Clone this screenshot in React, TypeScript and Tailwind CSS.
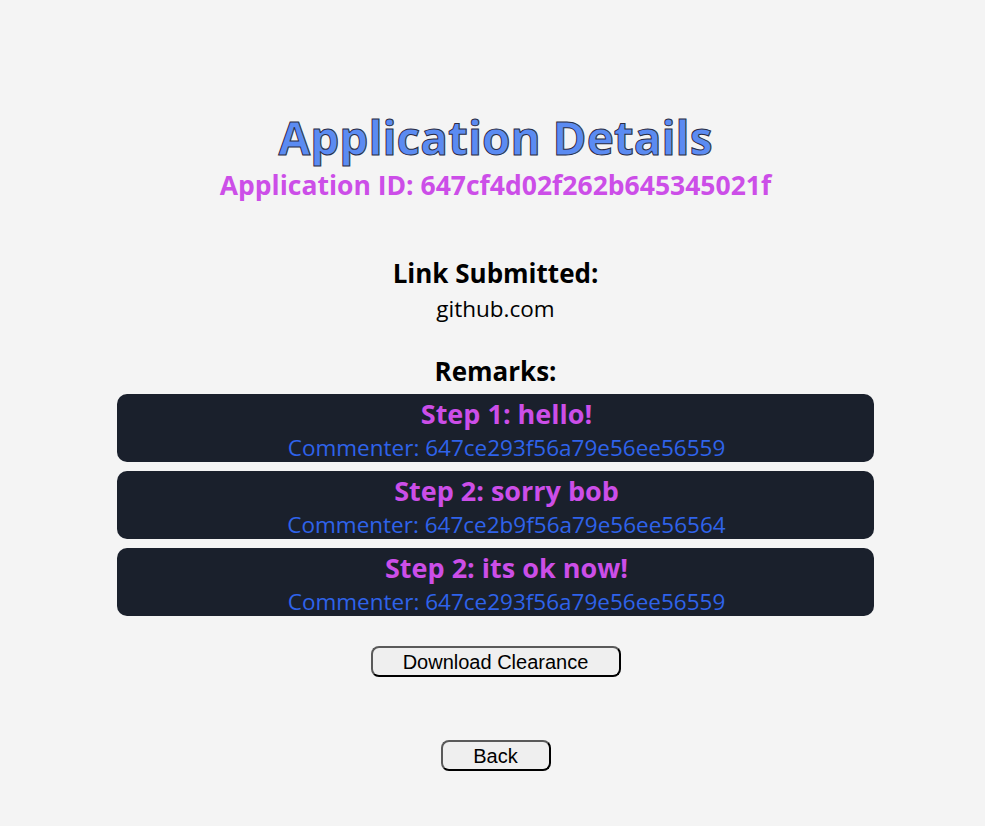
import React from "react";

const remarks = [
  { step: 1, text: "hello!", commenter: "647ce293f56a79e56ee56559" },
  { step: 2, text: "sorry bob", commenter: "647ce2b9f56a79e56ee56564" },
  { step: 2, text: "its ok now!", commenter: "647ce293f56a79e56ee56559" },
];

const App = () => {
  return (
    <div className="min-h-[826px] bg-[#f4f4f4] pl-[6px] pt-[113px] pb-[54px] font-['Open_Sans',sans-serif] text-black">
      <div className="flex flex-col items-center text-center">
        <h1 className="text-[46px] leading-[48px] font-bold text-[#5b8bf2] [-webkit-text-stroke:1px_#2b2d45]">
          Application Details
        </h1>
        <h2 className="mt-[6px] text-[26.5px] leading-[36px] font-bold text-[#cc4ee8]">
          Application ID: 647cf4d02f262b645345021f
        </h2>

        <h3 className="mt-[52px] text-[26px] leading-[36px] font-bold">Link Submitted:</h3>
        <p className="mt-[3px] text-[22.5px] leading-[30px]">github.com</p>

        <h3 className="mt-[29px] text-[26px] leading-[36px] font-bold">Remarks:</h3>
        <div className="mt-[5px] flex w-[757px] flex-col gap-[9px]">
          {remarks.map((r, i) => (
            <div key={i} className="flex h-[68px] flex-col items-center rounded-[10px] bg-[#1a202c] pt-[3px] pl-[22px]">
              <div className="text-[27px] leading-[34px] font-bold text-[#cc4ee8]">
                Step {r.step}: {r.text}
              </div>
              <div className="mt-[2px] text-[22.5px] leading-[30px] text-[#2f63ea]">Commenter: {r.commenter}</div>
            </div>
          ))}
        </div>

        <button
          type="button"
          className="mt-[30px] h-[31px] w-[250px] rounded-[8px] border-2 border-[#5a5a5a] border-r-black border-b-black bg-[#efefef] font-['Liberation_Sans',Arial,sans-serif] text-[20px] leading-none text-black"
        >
          Download Clearance
        </button>

        <button
          type="button"
          className="mt-[63px] h-[31px] w-[110px] rounded-[8px] border-2 border-[#5a5a5a] border-r-black border-b-black bg-[#efefef] font-['Liberation_Sans',Arial,sans-serif] text-[20px] leading-none text-black"
        >
          Back
        </button>
      </div>
    </div>
  );
};

export default App;
